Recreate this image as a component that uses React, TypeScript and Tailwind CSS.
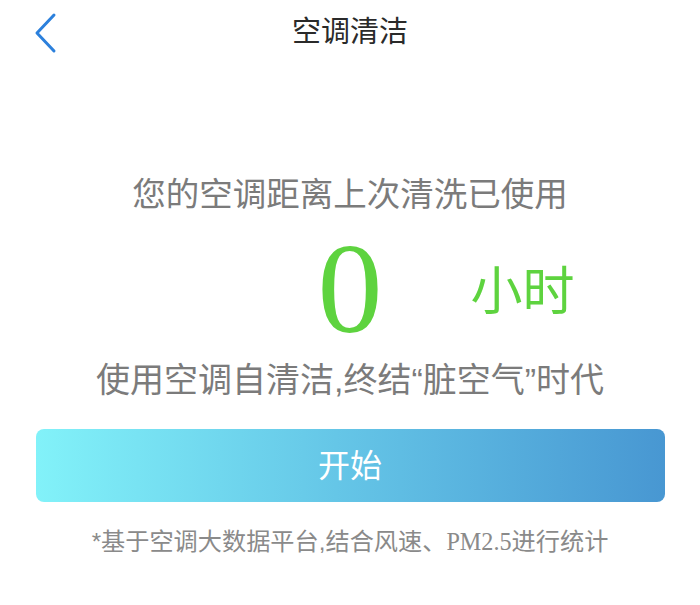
const sans = "font-['Liberation_Sans','Noto_Sans_CJK_SC',sans-serif]";

function BackIcon() {
  return (
    <svg width="26" height="42" viewBox="0 0 26 42" fill="none" className="mt-[2px]">
      <path d="M21 3 L4 21 L21 39" stroke="#2c80dc" strokeWidth="3" strokeLinecap="round" strokeLinejoin="round" />
    </svg>
  );
}

export default function App() {
  return (
    <div className={`w-[700px] h-[605px] bg-white ${sans}`}>
      <header className="h-[64px] grid grid-cols-[1fr_auto_1fr] items-center px-[33px]">
        <BackIcon />
        <h1 className="text-[29px] leading-none text-[#2a2a2a]">空调清洁</h1>
        <div />
      </header>

      <main className="flex flex-col items-center">
        <p className="mt-[111px] text-[33.5px] leading-[40px] text-[#7b7b7b]">您的空调距离上次清洗已使用</p>

        <div className="w-full h-[145px] grid grid-cols-[1fr_auto_1fr] items-center">
          <div />
          <span className="font-['Liberation_Serif',serif] text-[130px] leading-none text-[#5ed33f]">0</span>
          <span className="pl-[88px] pt-[8px] text-[52px] leading-none text-[#5ed33f]">小时</span>
        </div>

        <p className="text-[34px] leading-[40px] text-[#7b7b7b]">使用空调自清洁,终结“脏空气”时代</p>

        <button className="mt-[29px] w-[629px] h-[73px] rounded-[8px] bg-gradient-to-r from-[#82f2f9] to-[#4897d2] text-white text-[32px]">
          开始
        </button>

        <p className="mt-[25px] text-[24.2px] leading-[30px] text-[#8a8a8a]">
          *基于空调大数据平台,结合风速、<span className="font-['Liberation_Serif',serif]">PM2.5</span>进行统计
        </p>
      </main>
    </div>
  );
}
